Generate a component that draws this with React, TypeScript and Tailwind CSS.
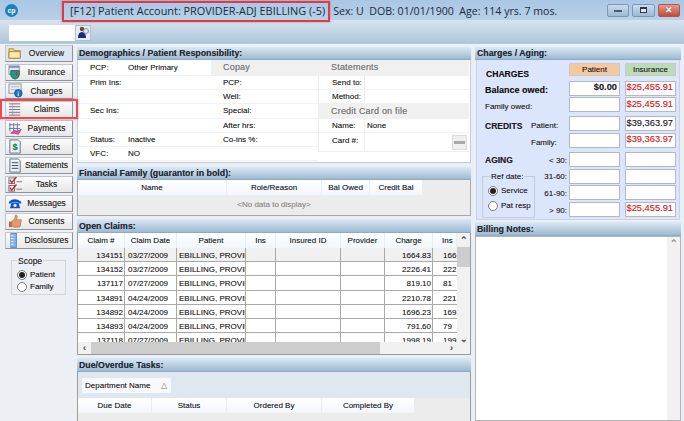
import React from "react";

const navIcons: Record<string, React.ReactNode> = {
  Overview: (<g><path d="M1 3h5l1 2h6v8H1z" fill="#f6d878" stroke="#a88a3a" /><path d="M1 6h12v7H1z" fill="#fbe9a8" stroke="#a88a3a" /></g>),
  Insurance: (<g><rect x="1" y="1" width="11" height="9" fill="#dfe6ee" stroke="#8a97a8" /><rect x="1" y="1" width="11" height="2" fill="#7c93b5" /><path d="M3 6h9v4q0 4-4.500 5Q3 14 3 10z" fill="#1f9d8a" stroke="#0d6b5e" /><path d="M6.500 9h2v-1.500h1V9h1.500v1H9.500v2h-1v-2h-2z" fill="#e0263a" /></g>),
  Charges: (<g><rect x="1" y="1" width="13" height="10" fill="#e6eaf0" stroke="#8a97a8" /><path d="M3 4h9M3 7h6" stroke="#b3bcc9" /><circle cx="11" cy="11" r="4" fill="#1f78c8" stroke="#155a99" /><path d="M11 9v1M11 11v3" stroke="#fff" /></g>),
  Claims: (<g><path d="M1 2h12" stroke="#d04040" /><path d="M1 5h12M1 8h12M1 11h12M1 14h12" stroke="#667085" /><path d="M5 2v12" stroke="#9aa5b4" /></g>),
  Payments: (<g><path d="M2 2v9M6 2v9M10 2v9M1 4h12M1 8h12" stroke="#6d7890" /><path d="M3 13l4-3 3 1 4-2-3 5-4-1z" fill="#d860b0" stroke="#a83c84" /></g>),
  Credits: (<g><path d="M2 1h9l2 2v12H2z" fill="#eef2f7" stroke="#56708f" /><text x="7.500" y="12" textAnchor="middle" fontSize="10" fontWeight="700" fill="#128a3a" fontFamily="Liberation Sans">$</text></g>),
  Statements: (<g><path d="M2 1h9l2 2v12H2z" fill="#eef2f7" stroke="#56708f" /><path d="M4 5h7M4 8h7M4 11h7" stroke="#33435a" /></g>),
  Tasks: (<g><rect x="1" y="1" width="6" height="6" fill="#fff" stroke="#667" /><rect x="1" y="9" width="6" height="6" fill="#fff" stroke="#667" /><path d="M2 3l2 3 5-6M2 11l2 3 5-6" stroke="#d81818" strokeWidth="1.400" fill="none" /><path d="M9 5h6M9 13h6" stroke="#777" /></g>),
  Messages: (<g><path d="M1 6q6-5 13 0v2h-3V6.500H4V8H1z" fill="#0f4fd0" /><path d="M4 7h7l2 6H2z" fill="#0f4fd0" /><circle cx="7.500" cy="10" r="1.800" fill="#dbe7ff" /></g>),
  Consents: (<g><path d="M1 8h3v6H1z" fill="#b86a3c" /><path d="M4 8l3-3 1-4q2 0 2 2l-1 3h5q1 1 0 2l-1 5q0 1-2 1H6l-2-1z" fill="#e39a66" stroke="#a8623a" strokeWidth=".6" /></g>),
  Disclosures: (<g><rect x="3" y="0.500" width="6" height="15" fill="#7fb2ea" stroke="#5b8fd0" /><path d="M3 3h3M3 6h3M3 9h3M3 12h3" stroke="#fff" /></g>),
};

const nav = ["Overview", "Insurance", "Charges", "Claims", "Payments", "Credits", "Statements", "Tasks", "Messages", "Consents", "Disclosures"];

function Radio({ on, label }: { on: boolean; label: string }) {
  return (
    <div className="flex items-center gap-[3px] h-[13px]">
      <span className="w-[10px] h-[10px] rounded-full border border-[#7a7a7a] bg-white flex items-center justify-center">
        {on && <span className="w-[6px] h-[6px] rounded-full bg-[#222]" />}
      </span>
      <span>{label}</span>
    </div>
  );
}

function Header({ tall, children }: { tall?: boolean; children: React.ReactNode }) {
  return (
    <div className={(tall ? "h-[14px] pt-[3px]" : "h-[13px] pt-[2px]") + " shrink-0 flex items-center pl-[2px] font-bold text-[8.800px] text-[#1d2733] bg-gradient-to-b from-[#dbe8f3] to-[#9dbbd3] border-b border-[#8fa9c0]"}>
      {children}
    </div>
  );
}

const leftRows: [string, string][] = [["PCP:", "Other Primary"], ["Prim Ins:", ""], ["", ""], ["Sec Ins:", ""], ["", ""], ["Status:", "Inactive"], ["VFC:", "NO"]];
const midRows = ["PCP:", "Well:", "Special:", "After hrs:", "Co-ins %:", ""];

function Demographics() {
  return (
    <div className="h-[103px] bg-white border-x border-b border-[#c3cedb] flex text-[8px] text-[#222]">
      <div className="w-[133px]">
        {leftRows.map(([a, b], i) => (
          <div key={i} className={(i === 0 ? "h-[16px]" : "h-[14.200px]") + " flex items-center border-b border-[#f1f1f1] pl-[12px] pt-[1px]"}>
            <span className="w-[38px]">{a}</span>
            <span>{b}</span>
          </div>
        ))}
      </div>
      <div className="w-[107px]">
        <div className="h-[16px] bg-[#f0f0f0] flex items-center pl-[12px] text-[#777] text-[9px] tracking-[0.200px]">Copay</div>
        {midRows.map((a, i) => (
          <div key={i} className="h-[14.200px] flex items-center border-b border-[#f1f1f1] pl-[12px] pt-[1px]">{a}</div>
        ))}
      </div>
      <div className="w-[151px]">
        <div className="h-[16px] bg-[#f0f0f0] flex items-center pl-[13px] text-[#777] text-[9px] tracking-[0.200px]">Statements</div>
        <div className="border-l border-[#eee]">
          {["Send to:", "Method:"].map((a) => (
            <div key={a} className="h-[14.200px] flex border-b border-[#f1f1f1]">
              <span className="w-[46px] pl-[13px] pt-[1px] flex items-center border-r border-[#eee] shrink-0">{a}</span>
            </div>
          ))}
        </div>
        <div className="h-[14.200px] bg-[#f0f0f0] flex items-center pl-[13px] text-[#777] text-[9px] tracking-[0.200px]">Credit Card on file</div>
        <div className="border-l border-[#eee]">
          <div className="h-[14.200px] flex border-b border-[#f1f1f1]">
            <span className="w-[46px] pl-[13px] pt-[1px] flex items-center border-r border-[#eee] shrink-0">Name:</span>
            <span className="pl-[2px] pt-[1px] flex items-center">None</span>
          </div>
          <div className="h-[19px] flex border-b border-[#eee]">
            <span className="w-[46px] pl-[13px] pt-[2px] border-r border-[#eee] shrink-0">Card #:</span>
            <span className="flex-1 flex justify-end pr-[2px] items-start pt-[2px]">
              <span className="w-[15px] h-[15px] bg-[#efefef] border border-[#ddd] flex items-center justify-center">
                <span className="w-[11px] h-[3px] bg-[#a9a9a9]" />
              </span>
            </span>
          </div>
        </div>
      </div>
    </div>
  );
}

function HeadCell({ w, children }: { w: number; children?: React.ReactNode }) {
  return (
    <div style={{ width: w }} className="shrink-0 h-full pt-[1px] flex items-center justify-center border-r border-[#e6edf5] bg-gradient-to-b from-white to-[#f2f6fb]">
      {children}
    </div>
  );
}

const claimCols = [47, 52, 69, 30, 65, 44, 48, 24];
const claimHead = ["Claim #", "Claim Date", "Patient", "Ins", "Insured ID", "Provider", "Charge", "Ins"];
const claims = [
  ["134151", "03/27/2009", "1664.83", "166"],
  ["134152", "03/27/2009", "2226.41", "222"],
  ["137117", "07/27/2009", "819.10", "81"],
  ["134891", "04/24/2009", "2210.78", "221"],
  ["134892", "04/24/2009", "1696.23", "169"],
  ["134893", "04/24/2009", "791.60", "79"],
  ["137118", "07/27/2009", "1998.19", "199"],
];

function OpenClaims() {
  return (
    <div className="h-[122px] flex border-l border-r border-[#9a9a9a] bg-white text-[8px] text-[#222] relative">
      <div className="w-[379px] flex flex-col shrink-0">
        <div className="flex-1 overflow-hidden">
          <div className="flex h-[15px]">
            {claimCols.map((w, i) => (
              <HeadCell key={i} w={w}><span className={i === 7 ? "pl-[9px] w-full" : ""}>{claimHead[i]}</span></HeadCell>
            ))}
          </div>
          {claims.map((r, i) => (
            <div key={i} className={"flex h-[14.200px] border-b border-[#a9a9a9] " + (i === 0 ? "bg-[#f0f0f0]" : "")}>
              <div style={{ width: claimCols[0] }} className="shrink-0 border-r border-[#a9a9a9] text-right pr-[1px] leading-[15px]">{r[0]}</div>
              <div style={{ width: claimCols[1] }} className="shrink-0 border-r border-[#a9a9a9] pl-[3px] leading-[15px]">{r[1]}</div>
              <div style={{ width: claimCols[2] }} className="shrink-0 border-r border-[#a9a9a9] pl-[2px] pr-[2px] leading-[15px] overflow-hidden whitespace-nowrap">EBILLING, PROVIDER</div>
              <div style={{ width: claimCols[3] }} className="shrink-0 border-r border-[#a9a9a9]" />
              <div style={{ width: claimCols[4] }} className="shrink-0 border-r border-[#a9a9a9]" />
              <div style={{ width: claimCols[5] }} className="shrink-0 border-r border-[#a9a9a9]" />
              <div style={{ width: claimCols[6] }} className="shrink-0 border-r border-[#a9a9a9] text-right pr-[1px] leading-[15px]">{r[2]}</div>
              <div style={{ width: claimCols[7] }} className="shrink-0 pl-[10px] overflow-hidden leading-[15px]">{r[3]}</div>
            </div>
          ))}
        </div>
        <div className="h-[13px] shrink-0 flex items-center bg-[#f1f1f1] border-b border-[#9a9a9a] relative">
          <span className="w-[13px] text-center text-[#555] text-[9px] leading-none font-bold">‹</span>
          <span className="w-[289px] h-full bg-[#cdcdcd]" />
          <span className="flex-1 text-right pr-[4px] text-[#555] text-[9px] leading-none font-bold">›</span>
        </div>
      </div>
      <div className="w-[13px] bg-[#f1f1f1] flex flex-col items-center text-[#555] border-b border-[#9a9a9a]">
        <span className="h-[14px] text-[9px] leading-[14px] font-bold">⌃</span>
        <span className="w-full h-[20px] bg-[#cdcdcd]" />
        <span className="flex-1" />
        <span className="h-[21px] text-[9px] leading-[13px] font-bold">⌄</span>
      </div>
    </div>
  );
}

function Money({ v, red }: { v?: string; red?: boolean }) {
  return (
    <div className={"w-[51px] h-[15px] bg-white border border-[#b3b8c4] flex items-center justify-end pr-[2px] text-[9.300px] " + (red ? "text-[#f01818]" : "text-[#222]")}>
      {v}
    </div>
  );
}

function MoneyRow({ p, i, pBold, iRed = true }: { p?: string; i?: string; pBold?: boolean; iRed?: boolean }) {
  return (
    <div className="flex gap-[5px]">
      <div className={pBold ? "font-bold" : ""}><Money v={p} /></div>
      <Money v={i} red={iRed} />
    </div>
  );
}

function Charges() {
  return (
    <div className="h-[160px] mx-[1px] bg-[#dbe5fb] border-x border-b border-[#ccd3de] text-[8px] text-[#222] flex pt-[3px]">
      <div className="w-[92px] shrink-0 flex flex-col">
        <div className="h-[18px] pl-[9px] pt-[5px] font-bold text-[8.600px] text-[#111] leading-[12px]">CHARGES</div>
        <div className="h-[17px] pl-[8px] flex items-center font-bold text-[9px] text-[#111] mt-[1px]">Balance owed:</div>
        <div className="h-[17px] pl-[8px] flex items-center">Family owed:</div>
        <div className="h-[17px] mt-[2px] pl-[8px] flex items-center">
          <span className="font-bold text-[8.500px] w-[46px]">CREDITS</span>Patient:
        </div>
        <div className="h-[17px] pl-[54px] flex items-center">Family:</div>
        <div className="flex-1 flex mt-[1px]">
          <div className="w-[60px] pl-[5px]">
            <div className="h-[17px] pl-[3px] flex items-center font-bold text-[8.500px]">AGING</div>
            <div className="relative border border-[#c5cbd6] h-[42px] w-[53px] mt-[7px] pt-[7px] pl-[5px] flex flex-col gap-[2px]">
              <span className="absolute top-[-6px] left-[7px] px-[1px] bg-[#dbe5fb]">Ref date:</span>
              <Radio on label="Service" />
              <Radio on={false} label="Pat resp" />
            </div>
          </div>
          <div className="flex-1 text-right pr-[2px] flex flex-col">
            {["< 30:", "31-60:", "61-90:", "> 90:"].map((t) => (
              <div key={t} className="h-[16.700px] flex items-center justify-end">{t}</div>
            ))}
          </div>
        </div>
      </div>
      <div className="flex flex-col gap-[1.700px]">
        <div className="flex gap-[5px] mb-[3px]">
          <div className="w-[51px] h-[13px] bg-[#f5c89e] border border-[#c9c9c9] flex items-center justify-center">Patient</div>
          <div className="w-[51px] h-[13px] bg-[#bcdcb8] border border-[#c9c9c9] flex items-center justify-center">Insurance</div>
        </div>
        <MoneyRow p="$0.00" pBold i="$25,455.91" />
        <MoneyRow i="$25,455.91" />
        <div className="h-[0.500px]" />
        <MoneyRow i="$39,363.97" iRed={false} />
        <MoneyRow i="$39,363.97" />
        <div className="h-[0.500px]" />
        <MoneyRow />
        <MoneyRow />
        <MoneyRow />
        <MoneyRow i="$25,455.91" />
      </div>
    </div>
  );
}

export default function App() {
  return (
    <div
      className="w-[684px] h-[421px] overflow-hidden relative bg-[#e9eff6] [text-shadow:0_0_0.600px_rgba(40,40,40,0.45)]"
      style={{ fontFamily: '"Liberation Sans", Arial, sans-serif' }}
    >
      {/* title bar */}
      <div className="h-[20px] flex items-center bg-gradient-to-b from-[#a9c6e4] to-[#b9d1e9] text-[12px] text-[#1c2a3a] relative">
        <span className="ml-[5px] w-[13px] h-[13px] rounded-full bg-[#1c7fc4] text-white text-[7px] font-bold flex items-center justify-center leading-none [text-shadow:none]">cp</span>
        <span className="ml-[52px] whitespace-pre font-['Open_Sans'] text-[10.900px] [text-shadow:none] pt-[3px]">[F12] Patient Account: PROVIDER-ADJ EBILLING (-5)</span>
        <span className="ml-[8px] whitespace-pre font-['Open_Sans'] text-[10.600px] [text-shadow:none] pt-[3px]">Sex: U  DOB: 01/01/1900  Age: 114 yrs. 7 mos.</span>
        <div className="ml-auto mr-[4px] flex">
          <span className="w-[22px] h-[13px] rounded-[2px] border border-[#7f97b3] bg-gradient-to-b from-[#c9dcee] to-[#9db8d4] flex items-center justify-center"><span className="w-[8px] h-[2px] mt-[2px] bg-white border-[0.5px] border-[#556]" /></span>
          <span className="ml-[3px] w-[23px] h-[13px] rounded-[2px] border border-[#7f97b3] bg-gradient-to-b from-[#c9dcee] to-[#9db8d4] flex items-center justify-center"><span className="w-[7px] h-[6px] border border-[#334] border-t-2 bg-white/60" /></span>
          <span className="ml-[3px] w-[22px] h-[13px] rounded-[2px] border border-[#a85a50] bg-gradient-to-b from-[#e59a8c] to-[#c24a38] flex items-center justify-center text-white text-[9px] font-bold leading-none [text-shadow:0_0_1px_#333]">✕</span>
        </div>
      </div>
      {/* toolbar */}
      <div className="h-[25px] flex items-center pl-[9px] pt-[1px] border-b border-[#f1f6fb] bg-gradient-to-b from-[#d6e4ef] to-[#aec6da]">
        <div className="w-[66px] h-[16px] bg-white" />
        <div className="w-[16px] h-[16px] bg-[#e6ecf2] border border-[#b4bfca] flex items-center justify-center">
          <svg width="13" height="13" viewBox="0 0 13 13">
            <circle cx="5" cy="3" r="2.200" fill="#6b4a30" />
            <path d="M1 12q0-6 4-6t4 6z" fill="#1d2a7a" />
            <circle cx="9" cy="5" r="2.500" fill="#dfe9f5" stroke="#8a97a8" />
          </svg>
        </div>
      </div>
      {/* main */}
      <div className="flex h-[376px]">
        <aside className="w-[77px] shrink-0 pl-[5px] bg-[#eceff3] flex flex-col text-[8.500px] text-[#222]">
          {nav.map((n, i) => (
            <div
              key={n}
              className={"w-[68px] h-[17px] mb-[1.700px] flex items-center pl-[2px] border border-[#c2c6cc] border-b-[#8f949c] border-r-[#8f949c] " + (i === 0 ? "bg-[#dde7f2]" : "bg-gradient-to-b from-[#fbfbfb] to-[#e7e7e7]")}
            >
              <svg width="15" height="15" viewBox="0 0 16 16" className="shrink-0">{navIcons[n]}</svg>
              <span className="flex-1 text-center whitespace-nowrap pr-[2px]">{n}</span>
            </div>
          ))}
          <div className="relative mt-[9px] w-[55px] h-[35px] ml-[6px] border border-[#d1d4d8] pl-[5px] pt-[8px] flex flex-col gap-0 text-[8px]">
            <span className="absolute top-[-6px] left-[5px] bg-[#eceff3] px-[1px] text-[8.500px]">Scope</span>
            <Radio on label="Patient" />
            <Radio on={false} label="Family" />
          </div>
        </aside>
        <main className="w-[394px] shrink-0 flex flex-col pt-[2px]">
          <Header>Demographics / Patient Responsibility:</Header>
          <Demographics />
          <div className="h-[4px] shrink-0" />
          <Header>Financial Family (guarantor in bold):</Header>
          <div className="h-[36px] shrink-0 bg-[#ececec] border-l border-r border-b border-[#a9a9a9] text-[8px] text-[#222]">
            <div className="flex h-[15px]">
              <HeadCell w={149}>Name</HeadCell>
              <HeadCell w={95}>Role/Reason</HeadCell>
              <HeadCell w={48}>Bal Owed</HeadCell>
              <HeadCell w={53}>Credit Bal</HeadCell>
            </div>
            <div className="h-[20px] flex items-center justify-center text-[#999]">&lt;No data to display&gt;</div>
          </div>
          <div className="h-[3px] shrink-0" />
          <Header tall>Open Claims:</Header>
          <OpenClaims />
          <div className="h-[3px] shrink-0" />
          <Header tall>Due/Overdue Tasks:</Header>
          <div className="flex-1 flex flex-col border-l border-r border-[#9a9a9a] text-[8px] text-[#222] bg-[#ececec]">
            <div className="h-[26px] bg-[#dfe8f1] pl-[4px] pt-[6px]">
              <div className="w-[89px] h-[15px] bg-[#f7f9fc] flex items-center pl-[3px] pt-[1px]">
                <span className="flex-1">Department Name</span>
                <span className="text-[#999] mr-[4px] text-[8px]">△</span>
              </div>
            </div>
            <div className="flex h-[15px]">
              <HeadCell w={74}>Due Date</HeadCell>
              <HeadCell w={75}>Status</HeadCell>
              <HeadCell w={95}>Ordered By</HeadCell>
              <HeadCell w={93}>Completed By</HeadCell>
            </div>
          </div>
        </main>
        <section className="w-[209px] ml-[4px] shrink-0 flex flex-col pt-[2px]">
          <div className="mr-[3px] flex flex-col flex-1">
            <Header>Charges / Aging:</Header>
            <Charges />
            <div className="h-[2px] shrink-0" />
            <Header tall>Billing Notes:</Header>
            <div className="flex-1 flex border border-[#b5b5b5] bg-white">
              <div className="flex-1" />
              <div className="w-[13px] bg-[#f1f1f1] flex justify-center text-[9px] text-[#999] font-bold">⌃</div>
            </div>
          </div>
        </section>
      </div>
      {/* annotation boxes */}
      <div className="absolute left-[62px] top-[1px] w-[268px] h-[21px] border-2 border-[#dd3c46] shadow-[0_0_2px_rgba(221,60,70,0.6)]" />
      <div className="absolute left-[0px] top-[99px] w-[78px] h-[20px] border-2 border-[#ec4a50] shadow-[0_0_2px_rgba(221,60,70,0.6)]" />
    </div>
  );
}
